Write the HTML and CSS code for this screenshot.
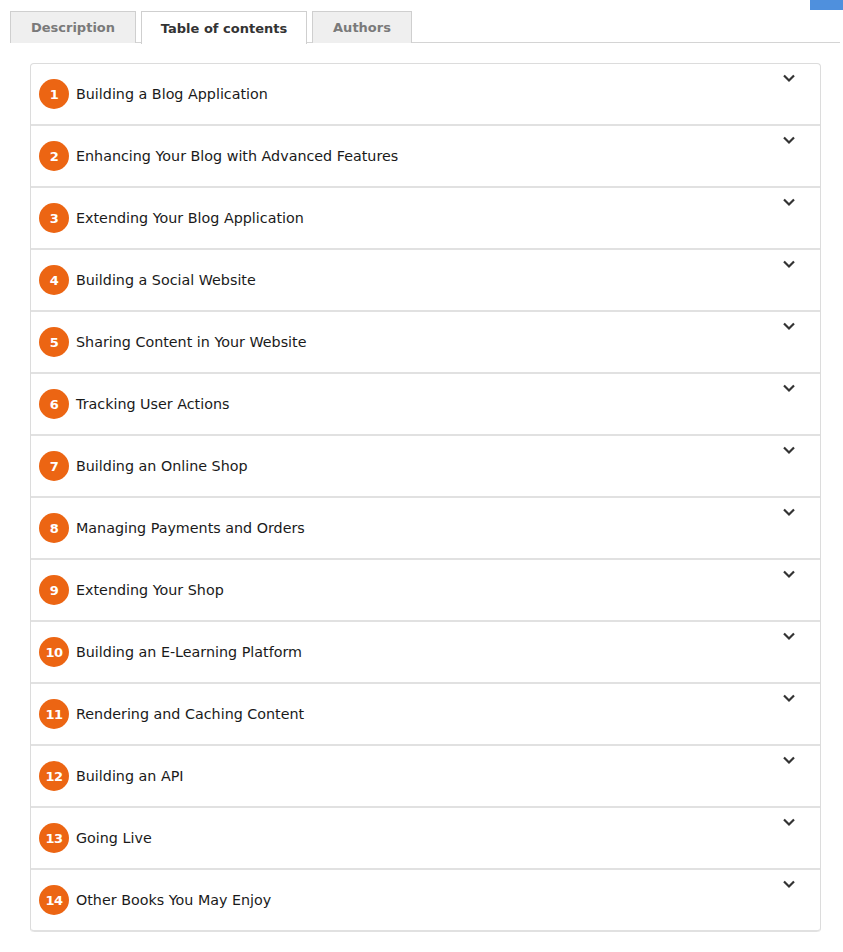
FILE: index.html
```html
<!DOCTYPE html>
<html>
<head>
<meta charset="utf-8">
<link rel="stylesheet" href="styles.css">
</head>
<body>
<div class="corner"></div>
<div class="tabs">
  <div class="tab">Description</div>
  <div class="tab active">Table of contents</div>
  <div class="tab">Authors</div>
</div>
<div class="content">
  <div class="accordion">
    <div class="row"><span class="num">1</span><span class="title">Building a Blog Application</span><span class="chev"><svg viewBox="0 0 14 10" width="14" height="10"><path d="M2 2.5 L7 7.5 L12 2.5" fill="none" stroke="#333" stroke-width="2.2"/></svg></span></div>
    <div class="row"><span class="num">2</span><span class="title">Enhancing Your Blog with Advanced Features</span><span class="chev"><svg viewBox="0 0 14 10" width="14" height="10"><path d="M2 2.5 L7 7.5 L12 2.5" fill="none" stroke="#333" stroke-width="2.2"/></svg></span></div>
    <div class="row"><span class="num">3</span><span class="title">Extending Your Blog Application</span><span class="chev"><svg viewBox="0 0 14 10" width="14" height="10"><path d="M2 2.5 L7 7.5 L12 2.5" fill="none" stroke="#333" stroke-width="2.2"/></svg></span></div>
    <div class="row"><span class="num">4</span><span class="title">Building a Social Website</span><span class="chev"><svg viewBox="0 0 14 10" width="14" height="10"><path d="M2 2.5 L7 7.5 L12 2.5" fill="none" stroke="#333" stroke-width="2.2"/></svg></span></div>
    <div class="row"><span class="num">5</span><span class="title">Sharing Content in Your Website</span><span class="chev"><svg viewBox="0 0 14 10" width="14" height="10"><path d="M2 2.5 L7 7.5 L12 2.5" fill="none" stroke="#333" stroke-width="2.2"/></svg></span></div>
    <div class="row"><span class="num">6</span><span class="title">Tracking User Actions</span><span class="chev"><svg viewBox="0 0 14 10" width="14" height="10"><path d="M2 2.5 L7 7.5 L12 2.5" fill="none" stroke="#333" stroke-width="2.2"/></svg></span></div>
    <div class="row"><span class="num">7</span><span class="title">Building an Online Shop</span><span class="chev"><svg viewBox="0 0 14 10" width="14" height="10"><path d="M2 2.5 L7 7.5 L12 2.5" fill="none" stroke="#333" stroke-width="2.2"/></svg></span></div>
    <div class="row"><span class="num">8</span><span class="title">Managing Payments and Orders</span><span class="chev"><svg viewBox="0 0 14 10" width="14" height="10"><path d="M2 2.5 L7 7.5 L12 2.5" fill="none" stroke="#333" stroke-width="2.2"/></svg></span></div>
    <div class="row"><span class="num">9</span><span class="title">Extending Your Shop</span><span class="chev"><svg viewBox="0 0 14 10" width="14" height="10"><path d="M2 2.5 L7 7.5 L12 2.5" fill="none" stroke="#333" stroke-width="2.2"/></svg></span></div>
    <div class="row"><span class="num">10</span><span class="title">Building an E-Learning Platform</span><span class="chev"><svg viewBox="0 0 14 10" width="14" height="10"><path d="M2 2.5 L7 7.5 L12 2.5" fill="none" stroke="#333" stroke-width="2.2"/></svg></span></div>
    <div class="row"><span class="num">11</span><span class="title">Rendering and Caching Content</span><span class="chev"><svg viewBox="0 0 14 10" width="14" height="10"><path d="M2 2.5 L7 7.5 L12 2.5" fill="none" stroke="#333" stroke-width="2.2"/></svg></span></div>
    <div class="row"><span class="num">12</span><span class="title">Building an API</span><span class="chev"><svg viewBox="0 0 14 10" width="14" height="10"><path d="M2 2.5 L7 7.5 L12 2.5" fill="none" stroke="#333" stroke-width="2.2"/></svg></span></div>
    <div class="row"><span class="num">13</span><span class="title">Going Live</span><span class="chev"><svg viewBox="0 0 14 10" width="14" height="10"><path d="M2 2.5 L7 7.5 L12 2.5" fill="none" stroke="#333" stroke-width="2.2"/></svg></span></div>
    <div class="row"><span class="num">14</span><span class="title">Other Books You May Enjoy</span><span class="chev"><svg viewBox="0 0 14 10" width="14" height="10"><path d="M2 2.5 L7 7.5 L12 2.5" fill="none" stroke="#333" stroke-width="2.2"/></svg></span></div>
  </div>
</div>
</body>
</html>
```
FILE: styles.css
```css
* { box-sizing: border-box; }
html, body { margin: 0; padding: 0; background: #fff; }
body {
  font-family: "DejaVu Sans", "Noto Sans", sans-serif;
  color: #222;
  position: relative;
  width: 843px;
}
.corner {
  position: absolute;
  top: 0;
  right: 0;
  width: 33px;
  height: 10px;
  background: #4f90dd;
}
.tabs {
  display: flex;
  gap: 5px;
  margin: 0 3px 0 10px;
  padding-top: 11px;
  border-bottom: 1px solid #d4d4d4;
  height: 43px;
}
.tab {
  height: 32px;
  border: 1px solid #cfcfcf;
  border-bottom: none;
  background: #efefef;
  color: #7a7a7a;
  font-size: 13px;
  font-weight: bold;
  padding: 0;
  white-space: nowrap;
  display: flex;
  align-items: center;
  justify-content: center;
}
.tab:nth-child(1) { width: 126px; }
.tab:nth-child(2) { width: 166px; }
.tab:nth-child(3) { width: 100px; }
.tab.active {
  background: #fff;
  color: #333;
  height: 33px;
  margin-bottom: -1px;
}
.content {
  padding: 20px 22px 0 30px;
}
.accordion {
  border: 1px solid #dcdcdc;
  border-bottom: none;
  border-radius: 4px;
  width: 791px;
}
.row {
  position: relative;
  height: 62px;
  border-bottom: 2px solid #e1e1e1;
  display: flex;
  align-items: center;
  padding-left: 8px;
}
.row:last-child { border-radius: 0 0 4px 4px; }
.num {
  width: 30px;
  height: 30px;
  border-radius: 50%;
  background: #ec6513;
  color: #fff;
  font-weight: bold;
  font-size: 13px;
  display: flex;
  align-items: center;
  justify-content: center;
  flex-shrink: 0;
  letter-spacing: -0.5px;
}
.title {
  margin-left: 7px;
  font-size: 14.3px;
  color: #1a1a1a;
}
.chev {
  position: absolute;
  top: 9px;
  right: 24px;
  display: block;
  line-height: 0;
}
```
